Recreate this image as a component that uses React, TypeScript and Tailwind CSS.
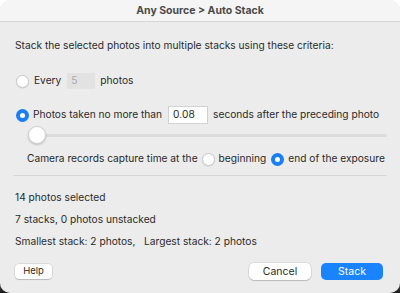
import React from "react";

function Radio({ checked }: { checked?: boolean }) {
  return checked ? (
    <span className="flex h-[13px] w-[13px] shrink-0 items-center justify-center rounded-full bg-[#1a7ef5]">
      <span className="block h-[5px] w-[5px] rounded-full bg-white" />
    </span>
  ) : (
    <span className="block h-[13px] w-[13px] shrink-0 rounded-full border border-[#c9c9c9] bg-white shadow-[0_0.5px_1px_rgba(0,0,0,0.12)]" />
  );
}

export default function App() {
  return (
    <div className="h-[293px] w-[400px] bg-[linear-gradient(to_bottom,#ffffff_85%,#1a1a1a_100%)]">
      <div
        className="flex h-[293px] w-[400px] flex-col overflow-hidden whitespace-nowrap rounded-[10px] bg-[#ececec] text-[10.2px] text-[#2a2a2a]"
        style={{ fontFamily: "Inter, 'Noto Sans', sans-serif" }}
      >
        <div className="flex h-[22px] shrink-0 items-center justify-center border-b border-[#d6d6d6] bg-[#f5f5f5] text-[10.5px] font-bold text-[#4a4a4a]">
          Any Source &gt; Auto Stack
        </div>
        <div className="flex flex-1 flex-col px-[15px]">
          <div className="mt-[14px] h-[18px] leading-[18px]">
            Stack the selected photos into multiple stacks using these criteria:
          </div>
          <div className="mt-[19px] flex h-[16px] items-center">
            <span className="ml-[1px] shrink-0"><Radio /></span>
            <span className="ml-[5px]">Every</span>
            <span className="ml-[6px] flex h-[16px] w-[28px] shrink-0 items-center bg-[#e2e2e2] pl-[4px] text-[#a8a8a8]">5</span>
            <span className="ml-[5px]">photos</span>
          </div>
          <div className="mt-[17px] flex h-[18px] items-center">
            <span className="ml-[1px] shrink-0"><Radio checked /></span>
            <span className="ml-[4px]">Photos taken no more than</span>
            <span className="ml-[6px] flex h-[18px] w-[40px] shrink-0 items-center border border-[#d2d2d2] bg-white pl-[4px]">0.08</span>
            <span className="ml-[5px]">seconds after the preceding photo</span>
          </div>
          <div className="relative mt-[2px] h-[18px]">
            <div className="absolute left-[15px] right-[-2px] top-[8px] h-[3px] rounded-full bg-[#dcdcdc]" />
            <div className="absolute left-[13px] top-0 h-[18px] w-[18px] rounded-full border border-[#d0d0d0] bg-white shadow-[0_1px_2px_rgba(0,0,0,0.2)]" />
          </div>
          <div className="mt-[6px] flex h-[18px] items-center pl-[12px]">
            <span>Camera records capture time at the</span>
            <span className="ml-[4px] shrink-0"><Radio /></span>
            <span className="ml-[4px]">beginning</span>
            <span className="ml-[5px] shrink-0"><Radio checked /></span>
            <span className="ml-[4px]">end of the exposure</span>
          </div>
          <div className="mt-[7px] -mx-[2px] h-px bg-[#d5d5d5]" />
          <div className="mt-[12px] h-[18px] leading-[18px]">14 photos selected</div>
          <div className="mt-[4px] h-[18px] leading-[18px]">7 stacks, 0 photos unstacked</div>
          <div className="mt-[4px] h-[18px] whitespace-pre leading-[18px]">Smallest stack: 2 photos,   Largest stack: 2 photos</div>
          <div className="mt-[13px] flex items-center">
            <button className="flex h-[15px] w-[37px] items-center justify-center rounded-[4px] bg-white text-[9.5px] shadow-[0_0_0_0.5px_rgba(0,0,0,0.15),0_1px_1px_rgba(0,0,0,0.15)]">
              Help
            </button>
            <div className="flex-1" />
            <button className="flex h-[17px] w-[62px] items-center justify-center rounded-[5px] bg-white text-[10.5px] shadow-[0_0_0_0.5px_rgba(0,0,0,0.15),0_1px_1px_rgba(0,0,0,0.15)]">
              Cancel
            </button>
            <button className="ml-[10px] mr-[2px] flex h-[17px] w-[62px] items-center justify-center rounded-[5px] bg-[#1a84ff] text-[10.5px] text-white">
              Stack
            </button>
          </div>
        </div>
      </div>
    </div>
  );
}
